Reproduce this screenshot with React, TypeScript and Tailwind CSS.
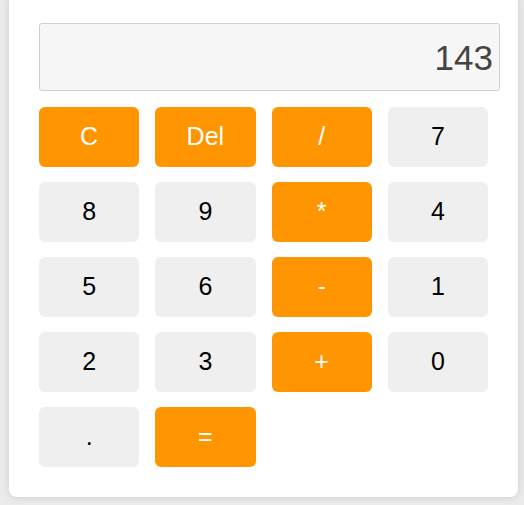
import React from 'react';

type Key = { label: string; op?: boolean };

const keys: Key[] = [
  { label: 'C', op: true },
  { label: 'Del', op: true },
  { label: '/', op: true },
  { label: '7' },
  { label: '8' },
  { label: '9' },
  { label: '*', op: true },
  { label: '4' },
  { label: '5' },
  { label: '6' },
  { label: '-', op: true },
  { label: '1' },
  { label: '2' },
  { label: '3' },
  { label: '+', op: true },
  { label: '0' },
  { label: '.' },
  { label: '=', op: true },
];

export default function App() {
  return (
    <div className="h-[505px] w-[524px] overflow-hidden bg-[#ececec] font-['Liberation_Sans',Arial,sans-serif]">
      <div className="-mt-[7px] ml-[9px] w-[509px] rounded-lg bg-white p-[30px] shadow-[0_0_10px_rgba(0,0,0,0.14)]">
        {/* Display */}
        <div className="flex h-[68px] w-[461px] items-center justify-end rounded-[3px] border border-[#cfcfcf] bg-[#f7f7f7] pr-[6px] pt-[2px] text-[35px] text-[#444]">
          143
        </div>

        {/* Keypad */}
        <div className="mt-4 grid w-[449px] grid-cols-4 gap-x-4 gap-y-[15px]">
          {keys.map((k) => (
            <button
              key={k.label}
              type="button"
              className={
                k.op
                  ? 'flex h-[60px] items-center justify-center rounded-md bg-[#ff9500] text-[25px] text-white'
                  : 'flex h-[60px] items-center justify-center rounded-md bg-[#efefef] text-[25px] text-black'
              }
            >
              {k.label}
            </button>
          ))}
        </div>
      </div>
    </div>
  );
}
